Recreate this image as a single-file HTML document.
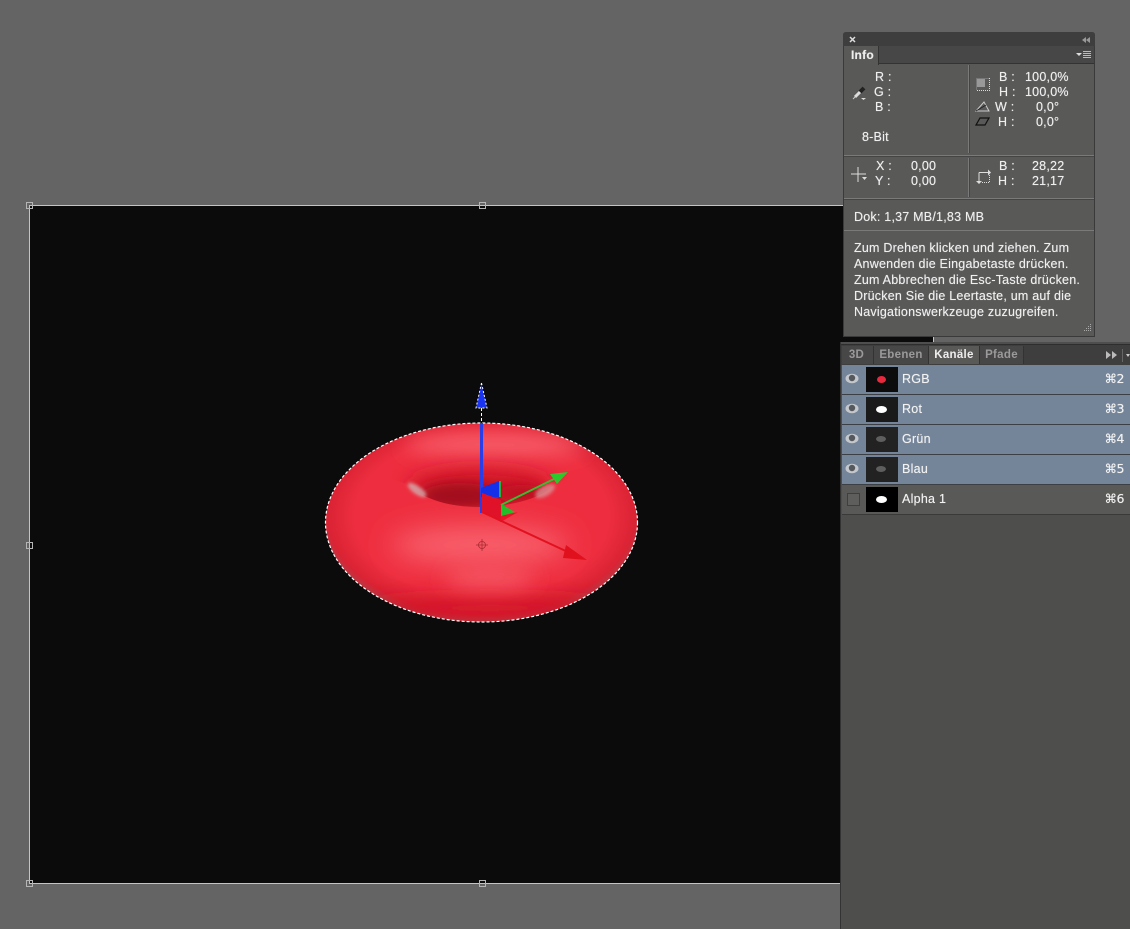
<!DOCTYPE html>
<html><head><meta charset="utf-8"><style>
html,body{margin:0;padding:0;width:1130px;height:929px;overflow:hidden;background:#646464}
body{position:relative;font-family:"Liberation Sans","DejaVu Sans",sans-serif;font-size:12px;color:#eee}
.a{position:absolute}
.t{position:absolute;line-height:15px;white-space:nowrap;color:#efefef;font-size:12.5px;letter-spacing:.22px;text-shadow:0 0 .6px rgba(255,255,255,.7)}
.b{font-weight:bold}
.h{position:absolute;width:5px;height:5px;border:1px solid #b5b5b5}
.row{position:absolute;left:842px;width:288px;height:29px;background:#758599;border-bottom:1px solid #3c3f43}
.thumb{position:absolute;left:24px;top:2px;width:32px;height:25px;background:#111}
.nm{position:absolute;left:60px;top:7px;font-size:12.5px;line-height:15px;color:#f2f2f2;letter-spacing:.25px;text-shadow:0 0 .6px rgba(255,255,255,.7)}
.sc{position:absolute;right:6px;top:6px;font-size:12.5px;line-height:15px;color:#f2f2f2;font-family:"DejaVu Sans",sans-serif;letter-spacing:-.5px;text-shadow:0 0 .6px rgba(255,255,255,.7)}
.tab{position:absolute;top:346px;height:18px;line-height:18px;text-align:center;font-weight:bold;font-size:11.5px;color:#9a9a9a;background:#474747;border-right:1px solid #333;letter-spacing:.3px}
</style></head><body>
<svg class="a" style="left:0;top:0" width="1130" height="929" viewBox="0 0 1130 929">
<defs>
<filter id="b1" x="-50%" y="-50%" width="200%" height="200%"><feGaussianBlur stdDeviation="1.5"/></filter>
<filter id="b3" x="-100%" y="-100%" width="300%" height="300%"><feGaussianBlur stdDeviation="3"/></filter>
<filter id="b6" x="-100%" y="-100%" width="300%" height="300%"><feGaussianBlur stdDeviation="6"/></filter>
<filter id="b10" x="-100%" y="-200%" width="300%" height="500%"><feGaussianBlur stdDeviation="10"/></filter>
<filter id="b14" x="-100%" y="-200%" width="300%" height="500%"><feGaussianBlur stdDeviation="14"/></filter>
<clipPath id="tc"><ellipse cx="481.5" cy="522.5" rx="156" ry="99.5"/></clipPath>
<clipPath id="hc"><path d="M390 430H570V478L554 484C546 497 510 507 480 507C450 507 425 500 406 484L390 478Z"/></clipPath>
<radialGradient id="body" cx=".5" cy=".47" r=".53">
<stop offset="0" stop-color="#ee2f40"/><stop offset=".76" stop-color="#ee2e40"/><stop offset=".92" stop-color="#da2334"/><stop offset="1" stop-color="#a8444c"/>
</radialGradient>
</defs>
<rect x="29.500" y="205.500" width="904" height="678" fill="#0a0b0a" stroke="#c4c4c4"/>
<g clip-path="url(#tc)">
<ellipse cx="481.500" cy="522.500" rx="157" ry="100" fill="url(#body)"/>
<ellipse cx="490" cy="608" rx="130" ry="12" fill="#d31528" filter="url(#b10)"/>
<ellipse cx="480" cy="545" rx="90" ry="18" fill="#f9646e" filter="url(#b14)"/>
<ellipse cx="490" cy="578" rx="45" ry="9" fill="#f65a66" filter="url(#b10)"/>
<ellipse cx="495" cy="445" rx="90" ry="11" fill="#f7616c" filter="url(#b10)"/>
<g clip-path="url(#hc)">
<ellipse cx="480" cy="488" rx="74" ry="20" fill="#cf1628" filter="url(#b10)"/>
<ellipse cx="460" cy="496" rx="40" ry="13" fill="#a20c1c" filter="url(#b6)"/>
<ellipse cx="522" cy="494" rx="26" ry="9" fill="#bb0f20" filter="url(#b6)"/>
</g>
<ellipse cx="417" cy="490" rx="11" ry="4" fill="#d4b0b0" opacity=".8" transform="rotate(35 417 490)" filter="url(#b1)"/>
<ellipse cx="545" cy="491" rx="11" ry="5" fill="#d89c9e" opacity=".7" transform="rotate(-30 545 491)" filter="url(#b1)"/>
</g>
<ellipse cx="481.500" cy="522.500" rx="156" ry="99.500" fill="none" stroke="#fff" stroke-width="1.200" stroke-dasharray="3 2"/>
<path d="M481.500 383L476 408L487 408Z" fill="#1a34f0" stroke="#fff" stroke-width="1" stroke-dasharray="2 2"/>
<path d="M481.500 408V423" stroke="#fff" stroke-width="1" stroke-dasharray="3 2"/>
<rect x="480" y="423" width="3" height="90" fill="#2a3ee8"/>
<path d="M481 488L499 481V497L481 497Z" fill="#1430e8"/>
<path d="M499 481H501V497H499Z" fill="#28b030"/>
<path d="M482 493L501 500V522L482 512Z" fill="#e0122a"/>
<path d="M501 505L558 477" stroke="#30c030" stroke-width="2"/>
<path d="M568 472L550 474L557 484Z" fill="#2cc82c"/>
<path d="M501 504L515 512L501 516Z" fill="#22c028"/>
<path d="M501 516L518 512L501 522Z" fill="#e8152a"/>
<path d="M482 512L570 553" stroke="#e2111f" stroke-width="2"/>
<path d="M587 560L566 545L563 558Z" fill="#e0101c"/>
<g stroke="#a82a30" fill="none" stroke-width=".8"><circle cx="482" cy="545" r="3.500"/><path d="M482 539V551M476 545H488"/></g>
<rect x="840" y="342" width="290" height="587" fill="#4e4e4c"/>
<rect x="840" y="342" width="1" height="587" fill="#333"/>
</svg>
<div class="h" style="left:26px;top:202px"></div>
<div class="h" style="left:479px;top:202px"></div>
<div class="h" style="left:26px;top:542px"></div>
<div class="h" style="left:26px;top:880px"></div>
<div class="h" style="left:479px;top:880px"></div>

<!-- Info panel -->
<div class="a" style="left:843px;top:32px;width:252px;height:305px;background:#595958;border:1px solid #3a3a3a;border-top:0;box-sizing:border-box;border-radius:3px 3px 0 0"></div>
<div class="a" style="left:843px;top:32px;width:252px;height:14px;background:#3e3e3e;border-radius:3px 3px 0 0"></div>
<div class="a" style="left:844px;top:46px;width:250px;height:18px;background:#474747;border-bottom:1px solid #333;box-sizing:border-box"></div>
<div class="a" style="left:844px;top:46px;width:35px;height:19px;background:#595958;border-right:1px solid #333;box-sizing:border-box"></div>
<div class="t b" style="left:851px;top:48px;font-size:12px;color:#eee">Info</div>
<svg class="a" style="left:843px;top:32px" width="252" height="305" viewBox="843 32 252 305">
<path d="M850 37L855 42M855 37L850 42" stroke="#ddd" stroke-width="1.500"/>
<path d="M1086 37L1082 40L1086 43ZM1090 37L1086 40L1090 43Z" fill="#999"/>
<path d="M1076 53H1082L1079 56Z" fill="#ddd"/><path d="M1083 51.500H1091M1083 53.500H1091M1083 55.500H1091M1083 57.500H1091" stroke="#bbb" stroke-width="1"/>
<path d="M968.500 65V153M968.500 158V197M844 155.500H1094M844 198.500H1094M844 230.500H1094" stroke="#7a7a7a" stroke-width="1" fill="none"/>
<path d="M969.500 65V153M969.500 158V197M844 156.500H1094M844 199.500H1094" stroke="#454545" stroke-width="1" fill="none"/>
<path d="M855 97L861 91" stroke="#ddd" stroke-width="3"/><path d="M860 92L864 88" stroke="#222" stroke-width="4"/><path d="M853 99L855 97" stroke="#ccc"/>
<path d="M861 98H866L863.500 100Z" fill="#ddd"/>
<path d="M977 90.500H989.500V78" fill="none" stroke="#ddd" stroke-dasharray="1 1"/><path d="M976.500 90V78.500H989" fill="none" stroke="#777"/><rect x="977" y="79" width="8" height="8" fill="#999"/>
<path d="M976 111H989L984 102Z" fill="none" stroke="#ccc"/><path d="M976 111L986 105" stroke="#222"/>
<path d="M976 125H985L989 118H980Z" fill="none" stroke="#111" stroke-width="1.200"/>
<path d="M851 174H866M858 167V182" stroke="#ddd" stroke-width="1"/><path d="M862 177H867L864.500 180Z" fill="#ddd"/>
<path d="M979 172.500V181" stroke="#ddd"/><path d="M976 181H982L979 184Z" fill="#ddd"/><path d="M979 172.500H988" stroke="#ddd"/><path d="M988 169.500V175.500L991 172.500Z" fill="#ddd"/><path d="M982 182.500H989.500V175" stroke="#ddd" stroke-dasharray="1 1" fill="none"/>
<g fill="#aaa"><rect x="1090" y="324" width="1" height="1"/><rect x="1088" y="326" width="1" height="1"/><rect x="1090" y="326" width="1" height="1"/><rect x="1086" y="328" width="1" height="1"/><rect x="1088" y="328" width="1" height="1"/><rect x="1090" y="328" width="1" height="1"/><rect x="1084" y="330" width="1" height="1"/><rect x="1086" y="330" width="1" height="1"/><rect x="1088" y="330" width="1" height="1"/><rect x="1090" y="330" width="1" height="1"/></g>
</svg>
<div class="t" style="left:875px;top:70px">R :</div>
<div class="t" style="left:874px;top:85px">G :</div>
<div class="t" style="left:875px;top:100px">B :</div>
<div class="t" style="left:862px;top:130px">8-Bit</div>
<div class="t" style="left:999px;top:70px">B :</div><div class="t" style="left:1025px;top:70px">100,0%</div>
<div class="t" style="left:999px;top:85px">H :</div><div class="t" style="left:1025px;top:85px">100,0%</div>
<div class="t" style="left:995px;top:100px">W :</div><div class="t" style="left:1036px;top:100px">0,0°</div>
<div class="t" style="left:998px;top:115px">H :</div><div class="t" style="left:1036px;top:115px">0,0°</div>
<div class="t" style="left:876px;top:159px">X :</div><div class="t" style="left:911px;top:159px">0,00</div>
<div class="t" style="left:875px;top:174px">Y :</div><div class="t" style="left:911px;top:174px">0,00</div>
<div class="t" style="left:999px;top:159px">B :</div><div class="t" style="left:1032px;top:159px">28,22</div>
<div class="t" style="left:998px;top:174px">H :</div><div class="t" style="left:1032px;top:174px">21,17</div>
<div class="t" style="left:854px;top:210px">Dok: 1,37 MB/1,83 MB</div>
<div class="t" style="left:854px;top:240px;line-height:16px">Zum Drehen klicken und ziehen. Zum<br>Anwenden die Eingabetaste drücken.<br>Zum Abbrechen die Esc-Taste drücken.<br>Drücken Sie die Leertaste, um auf die<br>Navigationswerkzeuge zuzugreifen.</div>

<!-- Channels -->
<div class="a" style="left:841px;top:344px;width:289px;height:21px;background:#3e3e3e;border-top:1px solid #2e2e2e;box-sizing:border-box"></div>
<div class="tab" style="left:842px;width:29px;padding-right:2px">3D</div>
<div class="tab" style="left:874px;width:54px">Ebenen</div>
<div class="tab" style="left:929px;width:50px;background:#595958;color:#eee">Kanäle</div>
<div class="tab" style="left:980px;width:43px">Pfade</div>
<svg class="a" style="left:1100px;top:345px" width="30" height="20"><path d="M6 6L11 10L6 14ZM12 6L17 10L12 14Z" fill="#bbb"/><path d="M22.500 4V17" stroke="#666"/><path d="M26 9H30L28 12Z" fill="#ccc"/></svg>

<div class="row" style="top:365px"><svg class="a" style="left:0;top:0" width="24" height="29"><ellipse cx="10" cy="13.500" rx="6.500" ry="4.800" fill="#c4c8cc"/><circle cx="10" cy="13" r="3.200" fill="#55585c"/></svg><div class="thumb" style="background:#0c0c0c"><div class="a" style="left:11px;top:9px;width:9px;height:7px;border-radius:50%;background:#e8283c"></div></div><div class="nm">RGB</div><div class="sc">⌘2</div></div>
<div class="row" style="top:395px"><svg class="a" style="left:0;top:0" width="24" height="29"><ellipse cx="10" cy="13.500" rx="6.500" ry="4.800" fill="#c4c8cc"/><circle cx="10" cy="13" r="3.200" fill="#55585c"/></svg><div class="thumb" style="background:#1a1a1a"><div class="a" style="left:10px;top:9px;width:11px;height:7px;border-radius:50%;background:#fff"></div></div><div class="nm">Rot</div><div class="sc">⌘3</div></div>
<div class="row" style="top:425px"><svg class="a" style="left:0;top:0" width="24" height="29"><ellipse cx="10" cy="13.500" rx="6.500" ry="4.800" fill="#c4c8cc"/><circle cx="10" cy="13" r="3.200" fill="#55585c"/></svg><div class="thumb" style="background:#222"><div class="a" style="left:10px;top:9px;width:10px;height:6px;border-radius:50%;background:#5e5e5e"></div></div><div class="nm">Grün</div><div class="sc">⌘4</div></div>
<div class="row" style="top:455px"><svg class="a" style="left:0;top:0" width="24" height="29"><ellipse cx="10" cy="13.500" rx="6.500" ry="4.800" fill="#c4c8cc"/><circle cx="10" cy="13" r="3.200" fill="#55585c"/></svg><div class="thumb" style="background:#222"><div class="a" style="left:10px;top:9px;width:10px;height:6px;border-radius:50%;background:#5e5e5e"></div></div><div class="nm">Blau</div><div class="sc">⌘5</div></div>
<div class="row" style="top:485px;background:#595958;border-bottom-color:#3a3a3a"><div class="a" style="left:5px;top:8px;width:11px;height:11px;border:1px solid #3f3f3f;background:#5e5e5d"></div><div class="thumb" style="background:#000"><div class="a" style="left:10px;top:9px;width:11px;height:7px;border-radius:50%;background:#fff"></div></div><div class="nm">Alpha 1</div><div class="sc">⌘6</div></div>
</body></html>
